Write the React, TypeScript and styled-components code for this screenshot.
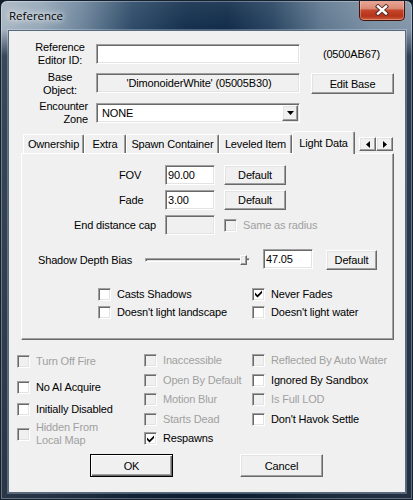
import React from 'react';
import styled, { createGlobalStyle, css } from 'styled-components';

const GlobalStyle = createGlobalStyle`
  html, body { margin: 0; padding: 0; background: #0f1d2c; }
  body {
    font-family: "Liberation Sans", Arial, sans-serif;
    font-size: 11px;
    letter-spacing: -0.15px;
    color: #000;
  }
  *, *::before, *::after { box-sizing: border-box; }
`;

/* classic 3D edges */
const sunken = css`
  border: 1px solid;
  border-color: #a0a0a0 #ffffff #ffffff #a0a0a0;
  box-shadow: inset 1px 1px 0 #696969, inset -1px -1px 0 #e3e3e3;
`;
const raised = css`
  border: 1px solid;
  border-color: #ffffff #696969 #696969 #ffffff;
  box-shadow: inset -1px -1px 0 #a0a0a0, inset 1px 1px 0 #e3e3e3;
`;

/* ---------- window frame ---------- */
const Window = styled.div`
  width: 413px;
  height: 500px;
  display: flex;
  flex-direction: column;
  border: 1px solid #15212e;
  border-radius: 7px 7px 0 0;
  overflow: hidden;
  background:
    linear-gradient(180deg, rgba(255,255,255,0.08) 0px, rgba(255,255,255,0) 28px, rgba(14,30,50,0.72) 55px, rgba(12,26,44,0.82) 100%),
    linear-gradient(90deg, #a9b7c4 0%, #95a7b8 10%, #6c849b 20%, #2e4b68 32%, #15314e 45%, #122d4a 55%, #2a4663 66%, #5f7890 78%, #7b90a4 90%, #8496a9 100%);
  box-shadow: inset 0 0 0 1px rgba(255,255,255,0.3);
`;

const TitleBar = styled.div`
  flex: none;
  height: 29px;
  display: flex;
  align-items: flex-start;
  padding: 0 7px 0 8px;
`;

const Title = styled.div`
  margin-top: 7px;
  font-family: "Open Sans", "Noto Sans", sans-serif;
  font-size: 11.5px;
  letter-spacing: 0;
  line-height: 16px;
  color: #000;
  text-shadow: 0 0 5px #fff, 0 0 9px rgba(255,255,255,0.85), 0 0 14px rgba(255,255,255,0.6);
`;

const CloseButton = styled.div`
  margin-left: auto;
  margin-top: -1px;
  width: 46px;
  height: 21px;
  border: 1px solid #3f140b;
  border-top: none;
  border-radius: 0 0 5px 5px;
  background: linear-gradient(180deg, #e8aa9b 0%, #da8b76 42%, #c4462b 52%, #b5331a 80%, #cf5e3e 100%);
  box-shadow: inset 0 0 0 1px rgba(255,220,210,0.35);
  display: flex;
  align-items: center;
  justify-content: center;
`;

const Client = styled.div`
  flex: none;
  height: 463px;
  margin: 0 6px 0 7px;
  background: #f0f0f0;
  border: 1px solid #566b80;
  box-shadow: 0 0 0 1px rgba(255,255,255,0.25);
  display: flex;
  flex-direction: column;
`;

/* ---------- header fields ---------- */
const HeaderGrid = styled.div`
  display: grid;
  grid-template-columns: 64px 211px 83px;
  grid-template-rows: 20px 21px 20px;
  column-gap: 4px;
  row-gap: 9px;
  margin: 13px 0 0 19px;
  align-items: center;
`;

const FieldLabel = styled.div<{ $align?: 'center' | 'right' }>`
  text-align: ${(p) => p.$align ?? 'center'};
  padding-right: ${(p) => (p.$align === 'right' ? 4 : 0)}px;
  line-height: 13px;
  white-space: nowrap;
`;

const Note = styled.div`
  text-align: center;
  padding-right: 2px;
`;

const Edit = styled.div<{ $w: number; $disabled?: boolean; $center?: boolean; $pad?: number }>`
  ${sunken};
  align-self: start;
  width: ${(p) => p.$w}px;
  height: 20px;
  background: ${(p) => (p.$disabled ? '#f0f0f0' : '#ffffff')};
  display: flex;
  align-items: center;
  justify-content: ${(p) => (p.$center ? 'center' : 'flex-start')};
  padding: 0 0 0 ${(p) => p.$pad ?? 2}px;
  white-space: nowrap;
  overflow: hidden;
`;

const ComboArrow = styled.div`
  ${raised};
  margin: 1px 1px 1px auto;
  width: 16px;
  height: 16px;
  background: #f0f0f0;
  display: flex;
  align-items: center;
  justify-content: center;
`;

const Button = styled.div<{ $w: number; $h?: number; $default?: boolean; $mt?: number }>`
  width: ${(p) => p.$w}px;
  height: ${(p) => p.$h ?? 20}px;
  margin-top: ${(p) => p.$mt ?? 0}px;
  align-self: start;
  background: #f0f0f0;
  display: flex;
  align-items: center;
  justify-content: center;
  white-space: nowrap;
  ${(p) =>
    p.$default
      ? css`
          border: 1px solid #000;
          box-shadow: inset 1px 1px 0 #fff, inset -1px -1px 0 #696969, inset -2px -2px 0 #a0a0a0;
        `
      : raised}
`;

/* ---------- tabs ---------- */
const TabArea = styled.div`
  margin: 8px 0 0 12px;
  width: 373px;
  display: flex;
  flex-direction: column;
`;

const TabStrip = styled.div`
  height: 22px;
  display: flex;
  align-items: flex-end;
  padding-left: 2px;
`;

const Tab = styled.div<{ $w: number; $active?: boolean }>`
  flex: none;
  width: ${(p) => p.$w}px;
  height: ${(p) => (p.$active ? 23 : 19)}px;
  margin-bottom: ${(p) => (p.$active ? -1 : 0)}px;
  padding-bottom: ${(p) => (p.$active ? 1 : 0)}px;
  z-index: ${(p) => (p.$active ? 1 : 0)};
  background: #f0f0f0;
  border-top: 1px solid #fff;
  border-left: 1px solid #fff;
  border-right: 1px solid #696969;
  box-shadow: inset -1px 0 0 #a0a0a0;
  border-radius: 2px 2px 0 0;
  display: flex;
  align-items: center;
  justify-content: center;
  white-space: nowrap;
`;

const TabScroll = styled.div`
  margin: 0 1px 2px auto;
  display: flex;
`;

const ScrollButton = styled.div`
  ${raised};
  width: 17px;
  height: 14px;
  background: #f0f0f0;
  display: flex;
  align-items: center;
  justify-content: center;
`;

const Panel = styled.div`
  height: 187px;
  border: 1px solid;
  border-color: #fff #696969 #696969 #fff;
  box-shadow: inset -1px -1px 0 #a0a0a0;
  display: flex;
  flex-direction: column;
`;

const FieldRows = styled.div`
  display: flex;
  flex-direction: column;
  gap: 5px;
  padding-top: 11px;
`;

const FieldRow = styled.div`
  display: grid;
  grid-template-columns: 134px 50px 62px;
  column-gap: 9px;
  height: 20px;
  align-items: center;
`;

const RowLabel = styled.div<{ $indent?: number; $right?: boolean }>`
  padding-left: ${(p) => p.$indent ?? 0}px;
  text-align: ${(p) => (p.$right ? 'right' : 'left')};
  white-space: nowrap;
`;

const ShadowRow = styled.div`
  display: grid;
  grid-template-columns: 110px 105px 50px 51px;
  column-gap: 13px;
  height: 21px;
  margin-top: 14px;
  align-items: center;
`;

const ShadowLabel = styled.div`
  padding-left: 16px;
  white-space: nowrap;
`;

const Slider = styled.div`
  position: relative;
  height: 21px;
  display: flex;
  align-items: center;
`;

const Track = styled.div`
  width: 100%;
  height: 4px;
  border: 1px solid;
  border-color: #a0a0a0 #fff #fff #a0a0a0;
  box-shadow: inset 1px 0 0 #696969, inset 0 1px 0 #696969;
  background: #e3e3e3;
`;

const Thumb = styled.div`
  position: absolute;
  top: 6px;
  width: 7px;
  height: 10px;
  background: #f0f0f0;
  ${raised};
`;

const LightChecks = styled.div`
  display: grid;
  grid-template-columns: 154px auto;
  grid-auto-rows: 18px;
  margin: 15px 0 0 76px;
`;

/* ---------- check boxes ---------- */
const CheckItem = styled.div<{ $disabled?: boolean; $mt?: number; $h?: number }>`
  display: flex;
  align-items: center;
  gap: 6px;
  height: ${(p) => p.$h ?? 18}px;
  margin-top: ${(p) => p.$mt ?? 0}px;
  color: ${(p) => (p.$disabled ? '#a0a0a0' : '#000')};
  white-space: nowrap;
`;

const Box = styled.span<{ $disabled?: boolean }>`
  flex: none;
  width: 13px;
  height: 13px;
  ${sunken};
  background: ${(p) => (p.$disabled ? '#f0f0f0' : '#ffffff')};
  display: flex;
  align-items: center;
  justify-content: center;
`;

const CheckText = styled.span`
  line-height: 13px;
`;

const FlagsGrid = styled.div`
  display: grid;
  grid-template-columns: 127px 108px 1fr;
  height: 103px;
  margin: 11px 0 0 8px;
  align-items: start;
`;

const FlagColumn = styled.div`
  display: flex;
  flex-direction: column;
`;

const Footer = styled.div`
  display: flex;
  gap: 67px;
  padding-left: 81px;
`;

/* ---------- small glyphs ---------- */
const Tick = () => (
  <svg width="7" height="8" viewBox="0 0 7 8">
    <polygon points="0,2.5 2.5,5 7,0.5 7,3 2.5,7.5 0,5" fill="#000" />
  </svg>
);

const ArrowDown = () => (
  <svg width="7" height="4" viewBox="0 0 7 4">
    <polygon points="0,0 7,0 3.5,4" fill="#000" />
  </svg>
);

const ArrowSide = ({ dir }: { dir: 'left' | 'right' }) => (
  <svg width="4" height="7" viewBox="0 0 4 7">
    <polygon points={dir === 'left' ? '4,0 4,7 0,3.5' : '0,0 0,7 4,3.5'} fill="#000" />
  </svg>
);

const CloseGlyph = () => (
  <svg width="14" height="12" viewBox="0 0 14 12">
    <path d="M3 2.5 L11 9.5 M11 2.5 L3 9.5" stroke="#4a2a24" strokeWidth="4.2" strokeLinecap="square" />
    <path d="M3 2.5 L11 9.5 M11 2.5 L3 9.5" stroke="#ffffff" strokeWidth="2.4" strokeLinecap="square" />
  </svg>
);

type Flag = {
  label: string | string[];
  checked?: boolean;
  disabled?: boolean;
  mt?: number;
  h?: number;
};

const Check = ({ label, checked, disabled, mt, h }: Flag) => (
  <CheckItem $disabled={disabled} $mt={mt} $h={h}>
    <Box $disabled={disabled}>{checked && <Tick />}</Box>
    <CheckText>
      {Array.isArray(label)
        ? label.map((l, i) => (
            <React.Fragment key={l}>
              {i > 0 && <br />}
              {l}
            </React.Fragment>
          ))
        : label}
    </CheckText>
  </CheckItem>
);

const tabs = [
  { name: 'Ownership', w: 61 },
  { name: 'Extra', w: 42 },
  { name: 'Spawn Container', w: 93 },
  { name: 'Leveled Item', w: 73 },
  { name: 'Light Data', w: 63, active: true },
];

const flagColumns: Flag[][] = [
  [
    { label: 'Turn Off Fire', disabled: true, mt: 1, h: 19.5 },
    { label: 'No AI Acquire', mt: 6, h: 19.5 },
    { label: 'Initially Disabled', mt: 3, h: 19.5 },
    { label: ['Hidden From', 'Local Map'], disabled: true, mt: 1.5, h: 26 },
  ],
  [
    { label: 'Inaccessible', disabled: true, h: 19.5 },
    { label: 'Open By Default', disabled: true, h: 19.5 },
    { label: 'Motion Blur', disabled: true, h: 19.5 },
    { label: 'Starts Dead', disabled: true, h: 19.5 },
    { label: 'Respawns', checked: true, h: 19.5 },
  ],
  [
    { label: 'Reflected By Auto Water', disabled: true, h: 19.5 },
    { label: 'Ignored By Sandbox', h: 19.5 },
    { label: 'Is Full LOD', disabled: true, h: 19.5 },
    { label: "Don't Havok Settle", h: 19.5 },
  ],
];

const shadowBias = { value: 47.05, min: 0, max: 48.6 };

export default function App() {
  const fraction = (shadowBias.value - shadowBias.min) / (shadowBias.max - shadowBias.min);
  return (
    <>
      <GlobalStyle />
      <Window>
        <TitleBar>
          <Title>Reference</Title>
          <CloseButton>
            <CloseGlyph />
          </CloseButton>
        </TitleBar>
        <Client>
          <HeaderGrid>
            <FieldLabel>
              Reference
              <br />
              Editor ID:
            </FieldLabel>
            <Edit $w={204} />
            <Note>(0500AB67)</Note>

            <FieldLabel>
              Base
              <br />
              Object:
            </FieldLabel>
            <Edit $w={204} $disabled $center>
              'DimonoiderWhite' (05005B30)
            </Edit>
            <Button $w={83} $h={21}>
              Edit Base
            </Button>

            <FieldLabel $align="right">
              Encounter
              <br />
              Zone
            </FieldLabel>
            <Edit $w={204} $pad={5}>
              NONE
              <ComboArrow>
                <ArrowDown />
              </ComboArrow>
            </Edit>
          </HeaderGrid>

          <TabArea>
            <TabStrip>
              {tabs.map((t) => (
                <Tab key={t.name} $w={t.w} $active={t.active}>
                  {t.name}
                </Tab>
              ))}
              <TabScroll>
                <ScrollButton>
                  <ArrowSide dir="left" />
                </ScrollButton>
                <ScrollButton>
                  <ArrowSide dir="right" />
                </ScrollButton>
              </TabScroll>
            </TabStrip>
            <Panel>
              <FieldRows>
                <FieldRow>
                  <RowLabel $indent={97}>FOV</RowLabel>
                  <Edit $w={50}>90.00</Edit>
                  <Button $w={62}>Default</Button>
                </FieldRow>
                <FieldRow>
                  <RowLabel $indent={97}>Fade</RowLabel>
                  <Edit $w={50}>3.00</Edit>
                  <Button $w={62}>Default</Button>
                </FieldRow>
                <FieldRow>
                  <RowLabel $right>End distance cap</RowLabel>
                  <Edit $w={50} $disabled />
                  <Check label="Same as radius" disabled />
                </FieldRow>
              </FieldRows>

              <ShadowRow>
                <ShadowLabel>Shadow Depth Bias</ShadowLabel>
                <Slider>
                  <Track />
                  <Thumb style={{ left: `calc(${fraction} * (100% - 7px))` }} />
                </Slider>
                <Edit $w={50}>47.05</Edit>
                <Button $w={51} $mt={1}>
                  Default
                </Button>
              </ShadowRow>

              <LightChecks>
                <Check label="Casts Shadows" />
                <Check label="Never Fades" checked />
                <Check label="Doesn't light landscape" />
                <Check label="Doesn't light water" />
              </LightChecks>
            </Panel>
          </TabArea>

          <FlagsGrid>
            {flagColumns.map((col, ci) => (
              <FlagColumn key={ci}>
                {col.map((f) => (
                  <Check key={Array.isArray(f.label) ? f.label.join(' ') : f.label} {...f} />
                ))}
              </FlagColumn>
            ))}
          </FlagsGrid>

          <Footer>
            <Button $w={83} $h={23} $default>
              OK
            </Button>
            <Button $w={83} $h={23}>
              Cancel
            </Button>
          </Footer>
        </Client>
      </Window>
    </>
  );
}
